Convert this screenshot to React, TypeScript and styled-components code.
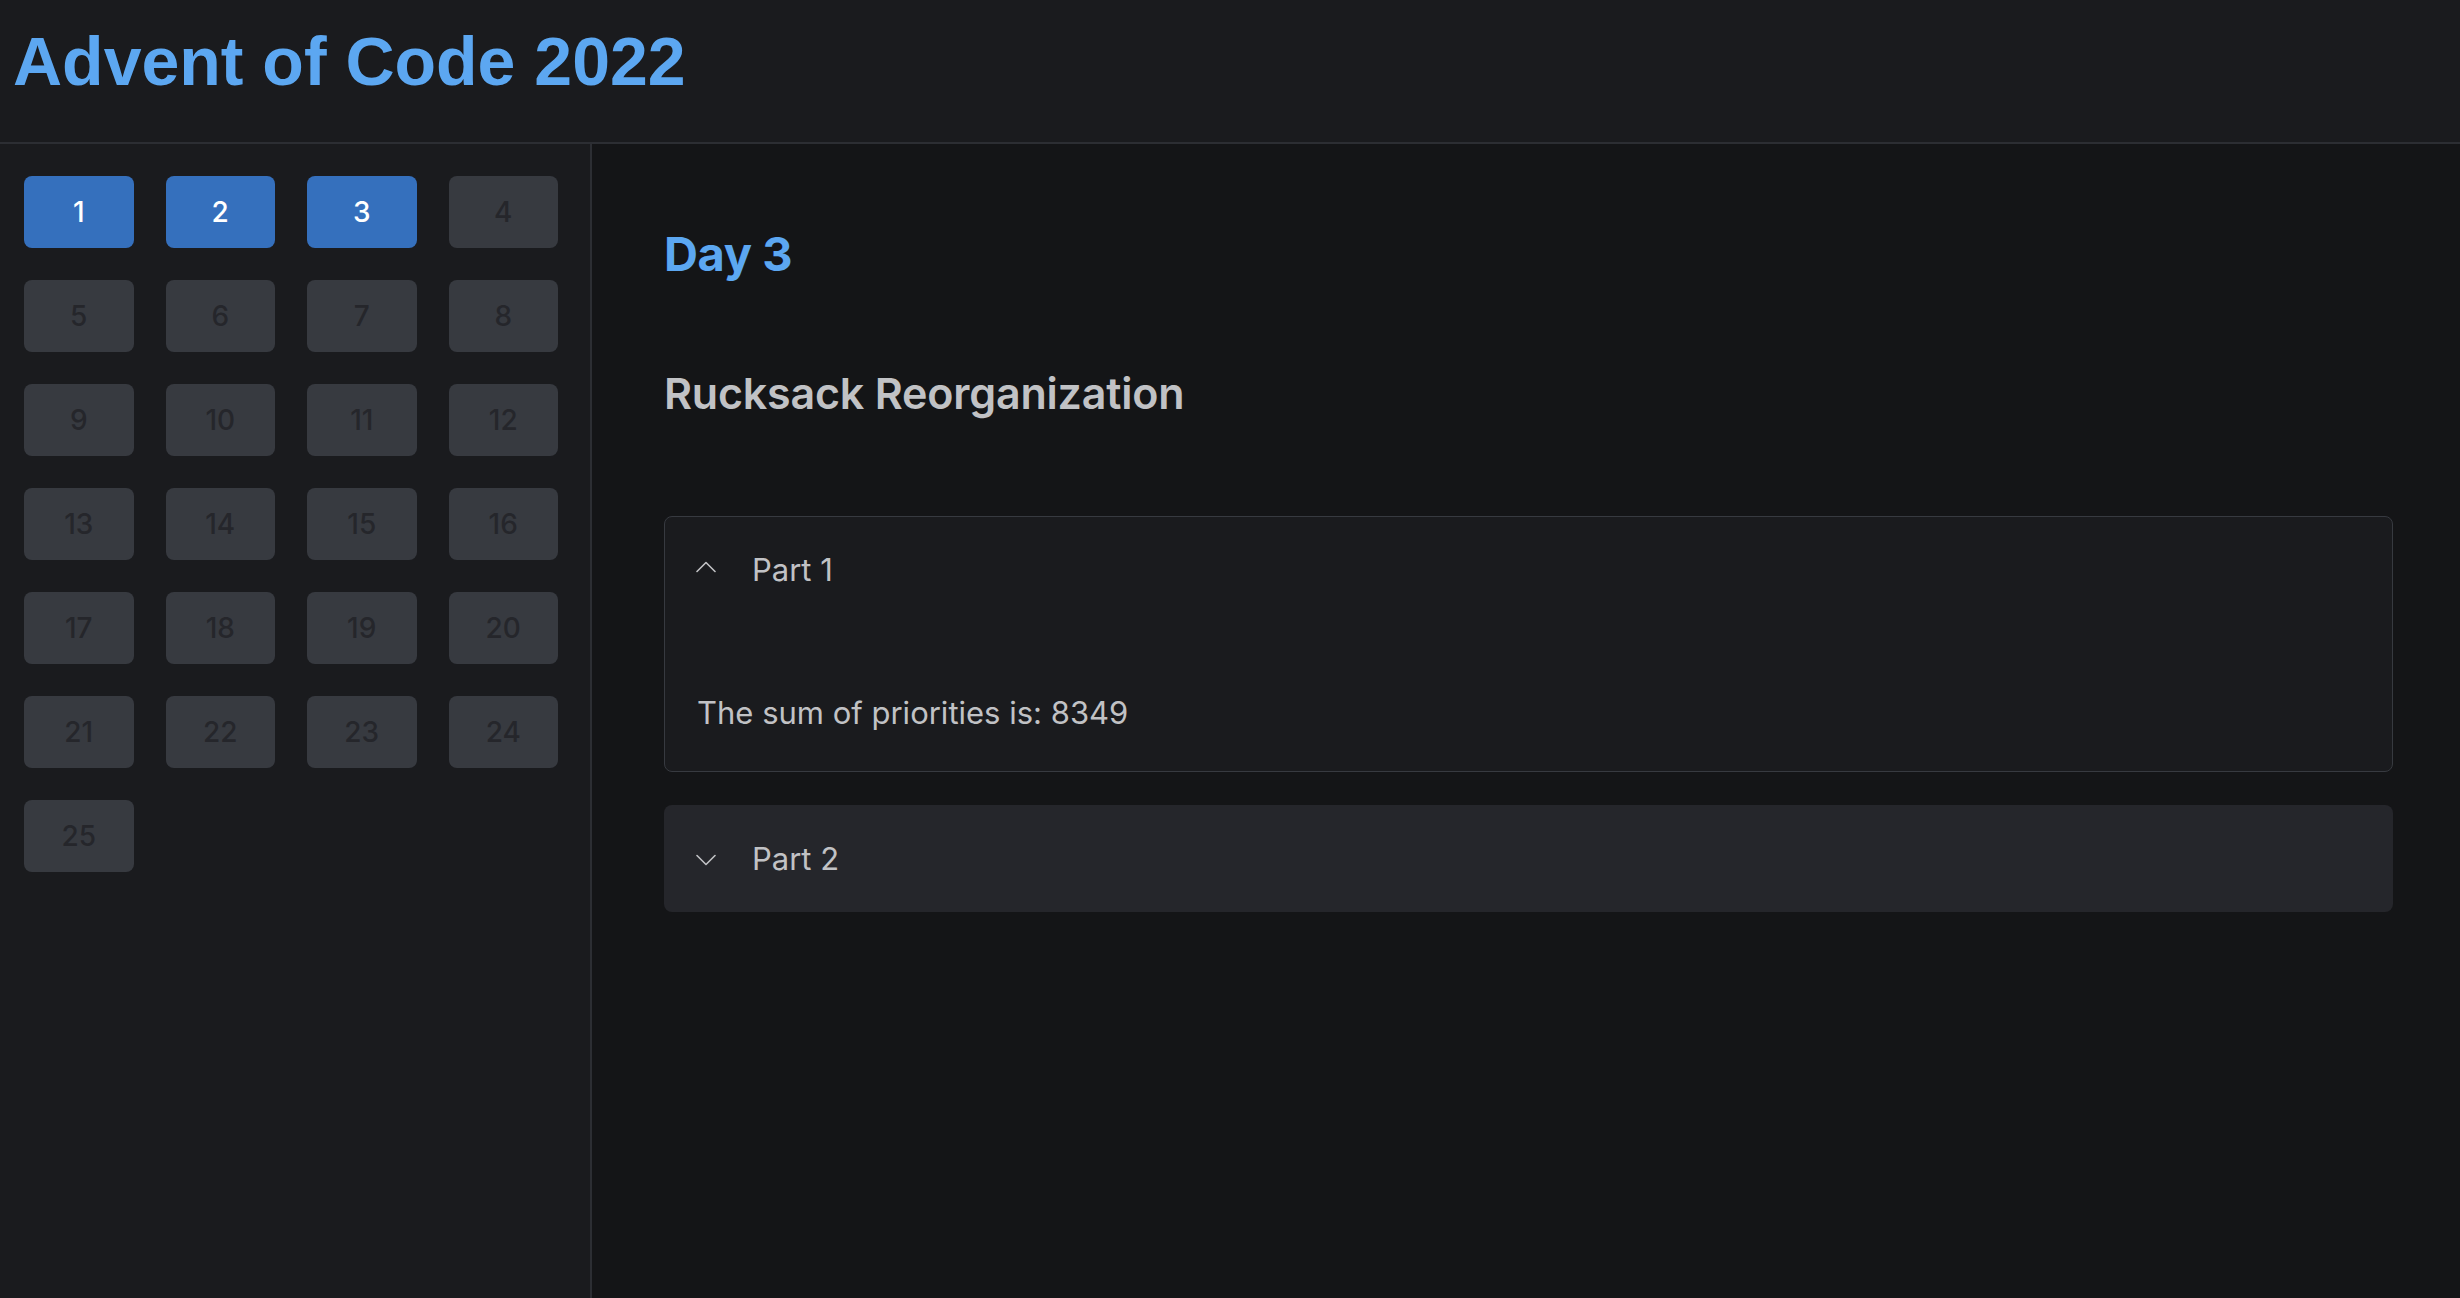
import React from "react";
import styled, { createGlobalStyle } from "styled-components";

const GlobalStyle = createGlobalStyle`
  html, body, #root {
    margin: 0;
    padding: 0;
    height: 100%;
  }
  body {
    background: #141517;
    font-family: Inter, "Noto Sans", sans-serif;
    color: #c1c2c5;
  }
  * { box-sizing: border-box; }
`;

const Shell = styled.div`
  display: flex;
  flex-direction: column;
  height: 100vh;
  overflow: hidden;
`;

const Header = styled.header`
  flex: 0 0 144px;
  display: flex;
  align-items: flex-start;
  padding: 27px 0 0 13px;
  background: #1a1b1e;
  border-bottom: 2px solid #2c2e33;
`;

const SiteTitle = styled.h1`
  margin: 0;
  font-family: "Liberation Sans", Arial, sans-serif;
  font-weight: 700;
  font-size: 68px;
  line-height: 68px;
  color: #5ca7f1;
`;

const Body = styled.div`
  flex: 1;
  display: flex;
  min-height: 0;
`;

const Sidebar = styled.nav`
  flex: 0 0 592px;
  background: #1a1b1e;
  border-right: 2px solid #2c2e33;
  padding: 32px 0 0 24px;
`;

const DayGrid = styled.div`
  display: grid;
  grid-template-columns: repeat(4, 109.5px);
  grid-auto-rows: 72px;
  column-gap: 32px;
  row-gap: 32px;
`;

const DayButton = styled.button<{ $active: boolean }>`
  border: none;
  border-radius: 8px;
  padding: 0;
  display: flex;
  align-items: center;
  justify-content: center;
  font-family: Inter, "Noto Sans", sans-serif;
  font-size: 28px;
  font-weight: 500;
  line-height: 1;
  background: ${(p) => (p.$active ? "#3570bd" : "#373a40")};
  color: ${(p) => (p.$active ? "#ffffff" : "#25262b")};
  cursor: ${(p) => (p.$active ? "pointer" : "not-allowed")};
`;

const Main = styled.main`
  flex: 1;
  background: #141517;
  padding: 86px 67px 0 72px;
  display: flex;
  flex-direction: column;
`;

const DayTitle = styled.h2`
  margin: 0;
  font-size: 47px;
  line-height: 47px;
  font-weight: 700;
  letter-spacing: -0.4px;
  color: #5ca7f1;
`;

const PuzzleTitle = styled.h3`
  margin: 95px 0 0;
  font-size: 43px;
  line-height: 43px;
  font-weight: 600;
  letter-spacing: -0.2px;
  color: #c1c2c5;
`;

const Accordion = styled.div`
  margin-top: 101px;
  display: flex;
  flex-direction: column;
  gap: 33px;
`;

const Item = styled.div<{ $open: boolean }>`
  border-radius: 8px;
  border: 1px solid ${(p) => (p.$open ? "#373a40" : "transparent")};
  background: ${(p) => (p.$open ? "#1a1b1e" : "#25262b")};
`;

const Control = styled.button`
  width: 100%;
  border: none;
  background: transparent;
  display: flex;
  align-items: center;
  gap: 36px;
  padding: 37px 31px;
  font-family: Inter, "Noto Sans", sans-serif;
  font-size: 31px;
  line-height: 31px;
  font-weight: 400;
  color: #c1c2c5;
  text-align: left;
  cursor: pointer;
`;

const Chevron = styled.svg<{ $open: boolean }>`
  flex: 0 0 20px;
  width: 20px;
  height: 16px;
  margin-bottom: 2px;
  transform: ${(p) => (p.$open ? "rotate(180deg)" : "none")};
`;

const Panel = styled.div`
  padding: 75px 32px 43px;
  font-size: 31px;
  line-height: 31px;
  color: #c1c2c5;
`;

const ChevronIcon = ({ open }: { open: boolean }) => (
  <Chevron $open={open} viewBox="0 0 20 16" fill="none">
    <polyline
      points="1,5.5 10,14.5 19,5.5"
      stroke="#c1c2c5"
      strokeWidth="1.6"
      strokeLinecap="round"
      strokeLinejoin="round"
    />
  </Chevron>
);

const days = Array.from({ length: 25 }, (_, i) => i + 1);
const solved = 3;

export default function App() {
  return (
    <>
      <GlobalStyle />
      <Shell>
        <Header>
          <SiteTitle>Advent of Code 2022</SiteTitle>
        </Header>
        <Body>
          <Sidebar>
            <DayGrid>
              {days.map((d) => (
                <DayButton key={d} $active={d <= solved}>
                  {d}
                </DayButton>
              ))}
            </DayGrid>
          </Sidebar>
          <Main>
            <DayTitle>Day 3</DayTitle>
            <PuzzleTitle>Rucksack Reorganization</PuzzleTitle>
            <Accordion>
              <Item $open>
                <Control>
                  <ChevronIcon open />
                  <span>Part 1</span>
                </Control>
                <Panel>The sum of priorities is: 8349</Panel>
              </Item>
              <Item $open={false}>
                <Control>
                  <ChevronIcon open={false} />
                  <span>Part 2</span>
                </Control>
              </Item>
            </Accordion>
          </Main>
        </Body>
      </Shell>
    </>
  );
}
